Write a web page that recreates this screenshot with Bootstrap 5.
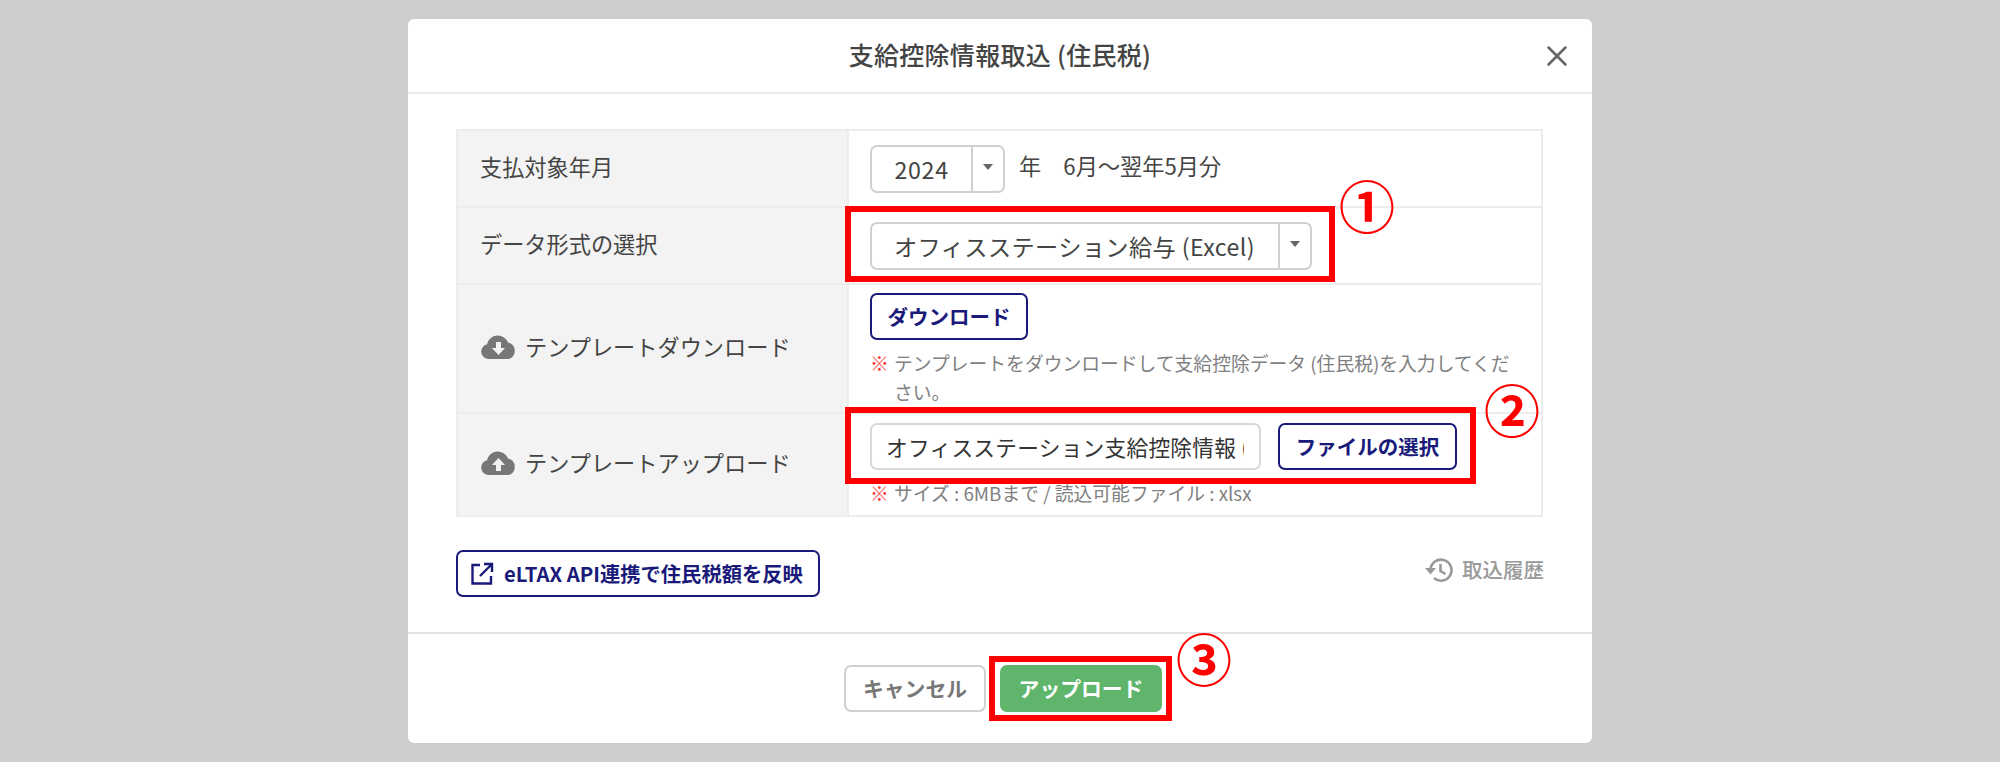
<!DOCTYPE html>
<html lang="ja"><head><meta charset="utf-8"><title>支給控除情報取込</title>
<link href="https://cdn.jsdelivr.net/npm/bootstrap@5.3.0/dist/css/bootstrap.min.css" rel="stylesheet">
<style>
html,body{height:100%}
body{background:#cfcdce;font-family:"Noto Sans CJK JP","Noto Sans",sans-serif;color:#444;overflow:hidden}
.dlg-wrap{width:1184px;margin:19px auto 0}
.dlg{height:724px;border:0;border-radius:6px;background:#fff}
.dlg-head{height:75px;padding:0 24px;border-bottom:2px solid #e9e9e9;border-radius:0}
.dlg-title{font-size:25px;font-weight:500;color:#444;letter-spacing:.3px;margin:0 0 2px}
.dlg-x{width:22px;height:22px;padding:0;background-size:22px;opacity:.6;flex:none}
.dlg-spacer{width:22px;flex:none}
.dlg-body{padding:35px 48px 0;flex:none}
.form-tbl{width:1087px;table-layout:fixed;border-collapse:collapse;margin:0;border:2px solid #ececec}
.form-tbl th,.form-tbl td{border:2px solid #ececec;vertical-align:middle}
.form-tbl th{width:391px;background:#f3f3f3;font-weight:400;font-size:22.2px;color:#444;padding:0 0 3px 22px}
.form-tbl td{padding:0 20px 0 21px}
.tr1{height:77px}.tr2{height:77px}.tr3{height:129px}.tr4{height:103px}
.cell-top{vertical-align:top!important}
.sel{height:48px;border:2px solid #d0d0d0;border-radius:7px;font-size:23.200px;color:#444;background:#fff}
.sel-txt{padding:0 22px;line-height:44px;letter-spacing:.4px}
.sel-caret{width:32px;border-left:2px solid #d0d0d0;display:flex;align-items:center;justify-content:center}
.sel-caret i{display:block;border:5px solid transparent;border-top:6px solid #666;border-bottom:0;margin-bottom:4px}
.sel-year{width:135px}.sel-year .sel-txt{width:100px;text-align:center;padding:0;letter-spacing:.7px}
.sel-fmt{width:442px}.sel-fmt .sel-txt{width:408px;white-space:nowrap}
.after-sel{font-size:22.2px;color:#444;margin:0 0 6px 14px}
.navy-btn{height:47px;border:2px solid #1a1a7a;border-radius:7px;background:#fff;color:#1a1a7a;font-size:20.5px;font-weight:700;padding:0;display:inline-flex;align-items:center;justify-content:center}
.navy-btn:hover{background:#fff;color:#1a1a7a;border-color:#1a1a7a}
.dl-btn{width:158px}.pick-btn{width:179px}
.note{font-size:18.8px;line-height:29px;color:#808080;padding-left:24px;text-indent:-24px}
.note b{color:#f33;font-weight:400;display:inline-block;width:24px;text-indent:0}
.row-pad{padding-top:9px!important}
.file-gap{gap:17px}
.file-name{width:391px;height:47px;border:2px solid #d8d8d8;border-radius:7px;padding:0 15px 0 14px;flex:none}
.file-clip{display:block;font-size:21.7px;color:#333;line-height:43px;overflow:hidden;white-space:nowrap;letter-spacing:.25px}
.ico{fill:#777;flex:none}
.eltax-btn{width:364px;font-size:20.3px;justify-content:flex-start;padding-left:12px;gap:10px}
.hist{font-size:20.5px;font-weight:500;color:#999;margin-bottom:8px}
.mt-link{margin-top:33px}
.dlg-foot{margin-top:auto;height:111px;padding:31px 0 0 6px;border-top:2px solid #e4e4e4;align-items:flex-start;justify-content:center;gap:14px;flex-wrap:nowrap;border-radius:0}
.foot-btn{height:47px;border-radius:7px;font-size:20.8px;font-weight:700;padding:0;margin:0;width:142px}
.cancel-btn{border:2px solid #d0d0d0;background:#fff;color:#777}
.upload-btn{width:162px;border:0;background:#5fb56c;color:#fff}
.mark-box{position:absolute;border:6px solid #f00;pointer-events:none}
.mark-num{position:absolute;color:#f00;font-family:"Noto Sans CJK JP",sans-serif;font-weight:700;font-size:56px;line-height:60px;width:60px;text-align:center}
.mb1{left:437px;top:187px;width:490px;height:76px}
.mb2{left:437px;top:388px;width:631px;height:77px}
.mb3{left:581px;top:637px;width:183px;height:65px}
.mn1{left:929px;top:155px}.mn2{left:1074px;top:359px}.mn3{left:766px;top:608px}
</style></head><body>
<div class="dlg-wrap">
<div class="modal-content dlg">
  <div class="modal-header dlg-head d-flex align-items-center justify-content-between">
    <span class="dlg-spacer"></span>
    <h5 class="modal-title dlg-title">支給控除情報取込 (住民税)</h5>
    <button type="button" class="btn-close dlg-x" aria-label="閉じる"></button>
  </div>
  <div class="modal-body dlg-body">
    <table class="table form-tbl">
      <tr class="tr1"><th>支払対象年月</th>
        <td><div class="d-flex align-items-center">
          <div class="sel sel-year d-flex"><span class="sel-txt">2024</span><span class="sel-caret"><i></i></span></div>
          <span class="after-sel">年　6月～翌年5月分</span></div></td></tr>
      <tr class="tr2"><th>データ形式の選択</th>
        <td><div class="sel sel-fmt d-flex"><span class="sel-txt">オフィスステーション給与 (Excel)</span><span class="sel-caret"><i></i></span></div></td></tr>
      <tr class="tr3"><th><span class="d-flex align-items-center gap-2">
          <svg class="ico" width="37" height="28" viewBox="0 0 36 28"><path d="M8 26a7.500 7.500 0 0 1-1.500-14.800A11 11 0 0 1 27.500 9.500 8.500 8.500 0 0 1 28 26z"/><path fill="#f3f3f3" d="M15.500 9h5v6h4l-6.500 7-6.500-7h4z"/></svg>
          <span>テンプレートダウンロード</span></span></th>
        <td class="cell-top pt-2"><button type="button" class="btn navy-btn dl-btn">ダウンロード</button>
          <div class="note mt-2"><b>※</b>テンプレートをダウンロードして支給控除データ (住民税)を入力してください。</div></td></tr>
      <tr class="tr4"><th><span class="d-flex align-items-center gap-2">
          <svg class="ico" width="37" height="28" viewBox="0 0 36 28"><path d="M8 26a7.500 7.500 0 0 1-1.500-14.800A11 11 0 0 1 27.500 9.500 8.500 8.500 0 0 1 28 26z"/><path fill="#f3f3f3" d="M15.500 22h5v-6h4l-6.500-7-6.500 7h4z"/></svg>
          <span>テンプレートアップロード</span></span></th>
        <td class="cell-top row-pad"><div class="d-flex align-items-center file-gap">
          <div class="file-name"><span class="file-clip">オフィスステーション支給控除情報 (住民税).xlsx</span></div>
          <button type="button" class="btn navy-btn pick-btn">ファイルの選択</button></div>
          <div class="note mt-2"><b>※</b>サイズ : 6MBまで / 読込可能ファイル : xlsx</div></td></tr>
    </table>
    <div class="d-flex justify-content-between align-items-center mt-link">
      <button type="button" class="btn navy-btn eltax-btn">
        <svg width="24" height="24" viewBox="0 0 24 24" fill="none" stroke="#1a1a7a" stroke-width="2.400"><path d="M10 3H2.500v18.500H21V14"/><path d="M10 14 21.500 2.500M14 2h8v8"/></svg>
        eLTAX API連携で住民税額を反映</button>
      <span class="hist d-flex align-items-center gap-2">
        <svg width="30" height="28" viewBox="0 0 30 28" fill="none" stroke="#999" stroke-width="2.600"><path d="M6.500 14a10.500 10.500 0 1 1 3.500 8"/><path d="M16.500 8v7l5 3"/><path fill="#999" stroke="none" d="M1 12h11l-5.500 6.500z"/></svg>
        取込履歴</span>
    </div>
  </div>
  <div class="modal-footer dlg-foot d-flex">
    <button type="button" class="btn foot-btn cancel-btn">キャンセル</button>
    <button type="button" class="btn foot-btn upload-btn">アップロード</button>
  </div>
  <div class="mark-box mb1"></div><div class="mark-num mn1">①</div>
  <div class="mark-box mb2"></div><div class="mark-num mn2">②</div>
  <div class="mark-box mb3"></div><div class="mark-num mn3">③</div>
</div></div>
<script src="https://cdn.jsdelivr.net/npm/bootstrap@5.3.0/dist/js/bootstrap.bundle.min.js"></script>
</body></html>
